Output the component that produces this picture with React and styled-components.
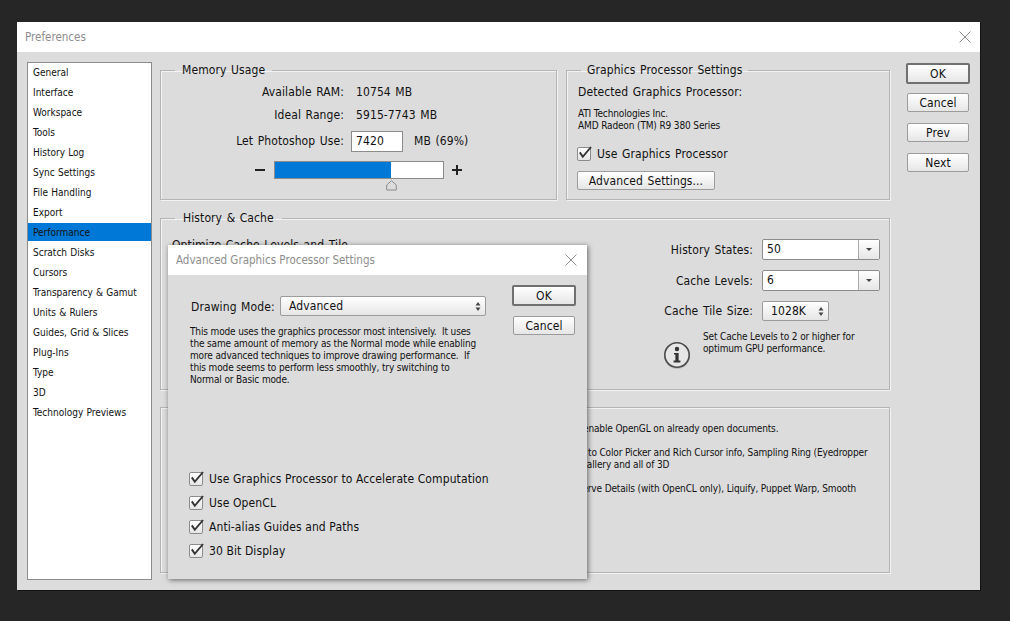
import React from "react";
import styled, { createGlobalStyle } from "styled-components";

const FONT = `"DejaVu Sans Condensed", "DejaVu Sans", sans-serif`;

const Global = createGlobalStyle`
  html, body { margin: 0; height: 621px; overflow: hidden; background: #262626; }
  body { font-family: ${FONT}; font-size: 12px; letter-spacing: 0.1px; word-spacing: 1px; color: #111; }
  * { box-sizing: border-box; }
`;

const Page = styled.div`
  padding: 22px 0 0 17px;
`;
const Win = styled.div`
  position: relative;
  width: 963px;
  height: 568px;
  background: #dcdcdc;
  box-shadow: 1px 1px 0 #111;
  display: flex;
  flex-direction: column;
`;
const TitleBar = styled.div`
  height: 30px;
  flex: none;
  background: #fff;
  display: flex;
  align-items: center;
  justify-content: space-between;
  padding: 0 ${p => p.$right}px 0 8px;
  color: #8d8d8d;
  font-size: 11.5px;
  letter-spacing: 0;
  word-spacing: 0;
`;
const Body = styled.div`
  flex: 1;
  display: flex;
  padding: 10px;
  min-height: 0;
`;
const Sidebar = styled.ul`
  list-style: none;
  margin: 0 8px 0 0;
  padding: 0;
  width: 125px;
  flex: none;
  background: #fff;
  border: 1px solid #8c8c8c;
`;
const SideItem = styled.li`
  height: 18px;
  margin-bottom: 2px;
  line-height: 20px;
  padding-left: 5px;
  font-size: 10px;
  letter-spacing: 0;
  word-spacing: 0.4px;
  background: ${p => (p.$on ? "#0078d7" : "transparent")};
  color: #111;
`;
const Main = styled.div`
  width: 730px;
  flex: none;
  display: grid;
  grid-template-columns: 397px 324px;
  grid-template-rows: 137px 179px 172px;
  column-gap: 9px;
  row-gap: 11px;
  margin-top: 1px;
`;
const Group = styled.fieldset`
  margin: ${p => p.$top || 0}px 0 0;
  padding: 0;
  min-width: 0;
  position: relative;
  border: 1px solid #b4b4b4;
  box-shadow: inset 1px 1px 0 #f2f2f2, 1px 1px 0 #f2f2f2;
  grid-column: ${p => p.$span || "auto"};
  height: calc(100% - ${p => p.$top || 0}px);
`;
const Legend = styled.legend`
  margin-left: ${p => p.$x}px;
  padding: 0 ${p => p.$pad}px;
  font-size: 12px;
  line-height: 14px;
  height: 14px;
`;
const Actions = styled.div`
  display: flex;
  flex-direction: column;
  align-items: center;
  gap: 11px;
  width: 64px;
  margin-left: 16px;
  margin-top: 1px;
`;
const Btn = styled.button`
  font: 12px ${FONT};
  letter-spacing: 0.1px;
  word-spacing: 1px;
  color: #111;
  padding: 0;
  flex: none;
  width: ${p => p.$w}px;
  height: ${p => (p.$primary ? 21 : 19)}px;
  margin-bottom: ${p => (p.$primary ? p.$after : 0)}px;
  border: ${p => (p.$primary ? "2px solid #707070" : "1px solid #9c9c9c")};
  border-radius: 2px;
  background: linear-gradient(#fff, #e6e6e6);
`;

const MemBody = styled.div`
  padding-top: 4px;
  display: flex;
  flex-direction: column;
  align-items: stretch;
`;
const MemRow = styled.div`
  display: grid;
  grid-template-columns: 183px 1fr;
  column-gap: 12px;
  align-items: center;
  height: ${p => p.$h}px;
`;
const Label = styled.span`
  text-align: right;
  font-size: 12px;
`;
const TileLabel = styled(Label)`
  margin-bottom: 2px;
`;
const Field = styled.div`
  width: 52px;
  height: 21px;
  background: #fff;
  border: 1px solid #8c8c8c;
  line-height: 19px;
  padding-left: 4px;
`;
const FieldWrap = styled.div`
  display: flex;
  align-items: center;
  gap: 11px;
  margin-left: -5px;
`;
const SliderRow = styled.div`
  margin-top: 6px;
  display: flex;
  align-items: center;
  justify-content: center;
  height: 18px;
`;
const Slider = styled.div`
  position: relative;
  width: 170px;
  height: 18px;
  margin: 0 8px 0 9px;
  background: #fff;
  border: 1px solid #8c8c8c;
`;
const Fill = styled.div`
  height: 100%;
  background: #0078d7;
`;
const Thumb = styled.svg`
  position: absolute;
  left: 111px;
  top: 18px;
`;

const GpuBody = styled.div`
  padding: 8px 0 0 10px;
  display: flex;
  flex-direction: column;
  align-items: flex-start;
`;
const GpuText = styled.span`
  padding-left: 1px;
`;
const Small = styled.p`
  margin: ${p => p.$m || "0"};
  padding-left: ${p => p.$l || 0}px;
  font-size: 10px;
  letter-spacing: -0.14px;
  word-spacing: 0;
  line-height: 12px;
  white-space: pre;
`;
const Check = styled.label`
  display: flex;
  align-items: center;
  gap: 6px;
  white-space: nowrap;
  height: ${p => p.$h || 24}px;
`;
const Box = styled.span`
  width: 14px;
  height: 14px;
  flex: none;
  border: 1px solid #8c8c8c;
  border-radius: 2px;
  background: linear-gradient(#fff, #e6e6e6);
  display: flex;
`;
const AdvBtn = styled(Btn)`
  margin-top: 10px;
`;

const HistBody = styled.div`
  position: relative;
  height: 100%;
`;
const Behind = styled.div`
  padding: 13px 0 0 11px;
`;
const HistForm = styled.div`
  position: absolute;
  right: 9px;
  top: 14px;
  width: 224px;
  display: grid;
  grid-template-columns: 1fr 118px;
  column-gap: 9px;
  row-gap: 10px;
  align-items: center;
  grid-auto-rows: 21px;
`;
const Combo = styled.div`
  height: 21px;
  background: #fff;
  border: 1px solid #8c8c8c;
  border-radius: 2px;
  display: flex;
  line-height: 19px;
  padding-left: 4px;
`;
const ComboVal = styled.span`
  flex: 1;
`;
const ComboArrow = styled.span`
  width: 21px;
  border-left: 1px solid #aaa;
  background: linear-gradient(#fff, #e6e6e6);
  display: flex;
  align-items: center;
  justify-content: center;
`;
const Sel = styled.div`
  width: ${p => p.$w}px;
  height: 20px;
  align-self: start;
  border: 1px solid #9c9c9c;
  border-radius: 2px;
  background: linear-gradient(#fff, #e6e6e6);
  display: flex;
  align-items: center;
  justify-content: space-between;
  padding: 0 4px 0 ${p => p.$l}px;
`;
const InfoRow = styled.div`
  position: absolute;
  left: 502px;
  top: 106px;
  display: flex;
  gap: 12px;
`;
const InfoIcon = styled.svg`
  margin-top: 10px;
  flex: none;
  overflow: visible;
`;
const BottomBody = styled.div`
  padding-top: 15px;
`;
const BottomLine = styled.p`
  margin: 0 0 ${p => p.$after}px ${p => p.$x}px;
  font-size: 10px;
  letter-spacing: -0.14px;
  word-spacing: 0;
  line-height: 12px;
  white-space: nowrap;
`;
const Modal = styled.div`
  position: absolute;
  left: 151px;
  top: 223px;
  width: 419px;
  height: 334px;
  background: #dcdcdc;
  box-shadow: 1px 1px 5px rgba(0, 0, 0, 0.55);
  display: flex;
  flex-direction: column;
`;
const ModalBody = styled.div`
  flex: 1;
  display: flex;
  padding: 10px 11px 16px 22px;
  min-height: 0;
`;
const ModalMain = styled.div`
  flex: 1;
  display: flex;
  flex-direction: column;
  min-width: 0;
`;
const ModeRow = styled.div`
  display: flex;
  align-items: center;
  margin-top: 11px;
  margin-bottom: 10px;
`;
const ModeLabel = styled.span`
  width: 90px;
  padding: 1px 0 0 1px;
  flex: none;
`;
const ChecksCol = styled.div`
  margin-top: auto;
  margin-left: -1px;
  word-spacing: 0;
`;
const ModalActions = styled.div`
  display: flex;
  flex-direction: column;
  align-items: center;
  gap: 10px;
  width: 64px;
  flex: none;
  margin-left: 26px;
`;

const Tick = () => (
  <svg width="14" height="14" viewBox="0 0 14 14" style={{ overflow: "visible" }}>
    <path d="M1.8 4.4 4.8 8.8 13 -1" fill="none" stroke="#333" strokeWidth="1.9" />
  </svg>
);
const Updown = () => (
  <svg width="6" height="9" viewBox="0 0 6 9">
    <path d="M3 0 5.5 3.5H.5zM3 9 .5 5.5h5z" fill="#444" />
  </svg>
);
const Down = () => (
  <svg width="6" height="3" viewBox="0 0 6 3">
    <path d="M0 0h6L3 3z" fill="#444" />
  </svg>
);
const CloseX = () => (
  <svg width="12" height="12" viewBox="0 0 12 12">
    <path d="M.5.5l11 11M11.5.5l-11 11" stroke="#8c8c8c" strokeWidth="1" fill="none" />
  </svg>
);
const Minus = () => (
  <svg width="10" height="10" viewBox="0 0 10 10">
    <path d="M0 4h10v2H0z" fill="#222" />
  </svg>
);
const Plus = () => (
  <svg width="10" height="10" viewBox="0 0 10 10">
    <path d="M0 4h4V0h2v4h4v2H6v4H4V6H0z" fill="#222" />
  </svg>
);

const items = ["General","Interface","Workspace","Tools","History Log","Sync Settings","File Handling","Export","Performance","Scratch Disks","Cursors","Transparency & Gamut","Units & Rulers","Guides, Grid & Slices","Plug-Ins","Type","3D","Technology Previews"];
const checks = ["Use Graphics Processor to Accelerate Computation","Use OpenCL","Anti-alias Guides and Paths","30 Bit Display"];

export default function App() {
  return (
    <Page>
      <Global />
      <Win>
        <TitleBar $right={9}>Preferences<CloseX /></TitleBar>
        <Body>
          <Sidebar>
            {items.map(t => <SideItem key={t} $on={t === "Performance"}>{t}</SideItem>)}
          </Sidebar>
          <Main>
            <Group>
              <Legend $x={14} $pad={7}>Memory Usage</Legend>
              <MemBody>
                <MemRow $h={22}><Label>Available RAM:</Label><span>10754 MB</span></MemRow>
                <MemRow $h={24}><Label>Ideal Range:</Label><span>5915-7743 MB</span></MemRow>
                <MemRow $h={28}><Label>Let Photoshop Use:</Label><FieldWrap><Field>7420</Field><span>MB (69%)</span></FieldWrap></MemRow>
                <SliderRow>
                  <Minus />
                  <Slider>
                    <Fill style={{ width: "69.05%" }} />
                    <Thumb width="11" height="11" viewBox="0 0 11 11"><path d="M5.5.7 10.3 5v5H.7V5z" fill="#dcdcdc" stroke="#8c8c8c" /></Thumb>
                  </Slider>
                  <Plus />
                </SliderRow>
              </MemBody>
            </Group>
            <Group>
              <Legend $x={14} $pad={6}>Graphics Processor Settings</Legend>
              <GpuBody>
                <GpuText>Detected Graphics Processor:</GpuText>
                <Small $m="9px 0 15px" $l={1}>{"ATI Technologies Inc.\nAMD Radeon (TM) R9 380 Series"}</Small>
                <Check $h={14}><Box><Tick /></Box>Use Graphics Processor</Check>
                <AdvBtn $w={138}>Advanced Settings...</AdvBtn>
              </GpuBody>
            </Group>
            <Group $span="1 / -1">
              <Legend $x={14} $pad={8}>History &amp; Cache</Legend>
              <HistBody>
                <Behind>Optimize Cache Levels and Tile</Behind>
                <HistForm>
                  <Label>History States:</Label>
                  <Combo><ComboVal>50</ComboVal><ComboArrow><Down /></ComboArrow></Combo>
                  <Label>Cache Levels:</Label>
                  <Combo><ComboVal>6</ComboVal><ComboArrow><Down /></ComboArrow></Combo>
                  <TileLabel>Cache Tile Size:</TileLabel>
                  <Sel $w={67} $l={8}>1028K<Updown /></Sel>
                </HistForm>
                <InfoRow>
                  <InfoIcon width="28" height="28" viewBox="0 0 28 28">
                    <circle cx="14" cy="15" r="13" fill="#000" opacity="0.14" />
                    <circle cx="14" cy="14" r="12.2" fill="#e6e6e6" stroke="#4a4a4a" strokeWidth="1.6" />
                    <circle cx="14" cy="8" r="2.2" fill="#333" />
                    <path d="M11 12h4.6v7.6H17.4V21.4H10.6V19.6H12.4V13.6H11z" fill="#333" />
                  </InfoIcon>
                  <Small>{"Set Cache Levels to 2 or higher for\noptimum GPU performance."}</Small>
                </InfoRow>
              </HistBody>
            </Group>
            <Group $span="1 / -1" $top={6}>
              <BottomBody>
                <BottomLine $x={422} $after={12}>enable OpenGL on already open documents.</BottomLine>
                <BottomLine $x={427} $after={0}>to Color Picker and Rich Cursor info, Sampling Ring (Eyedropper</BottomLine>
                <BottomLine $x={419} $after={12}>Gallery and all of 3D</BottomLine>
                <BottomLine $x={403} $after={0}>Preserve Details (with OpenCL only), Liquify, Puppet Warp, Smooth</BottomLine>
              </BottomBody>
            </Group>
          </Main>
          <Actions>
            <Btn $primary $after={-2} $w={64}>OK</Btn>
            <Btn $w={62}>Cancel</Btn>
            <Btn $w={62}>Prev</Btn>
            <Btn $w={62}>Next</Btn>
          </Actions>
        </Body>
        <Modal>
          <TitleBar $right={10}>Advanced Graphics Processor Settings<CloseX /></TitleBar>
          <ModalBody>
            <ModalMain>
              <ModeRow>
                <ModeLabel>Drawing Mode:</ModeLabel>
                <Sel $w={206} $l={8}>Advanced<Updown /></Sel>
              </ModeRow>
              <Small>{"This mode uses the graphics processor most intensively.  It uses\nthe same amount of memory as the Normal mode while enabling\nmore advanced techniques to improve drawing performance.  If\nthis mode seems to perform less smoothly, try switching to\nNormal or Basic mode."}</Small>
              <ChecksCol>
                {checks.map(c => <Check key={c}><Box><Tick /></Box>{c}</Check>)}
              </ChecksCol>
            </ModalMain>
            <ModalActions>
              <Btn $primary $after={0} $w={64}>OK</Btn>
              <Btn $w={62}>Cancel</Btn>
            </ModalActions>
          </ModalBody>
        </Modal>
      </Win>
    </Page>
  );
}
